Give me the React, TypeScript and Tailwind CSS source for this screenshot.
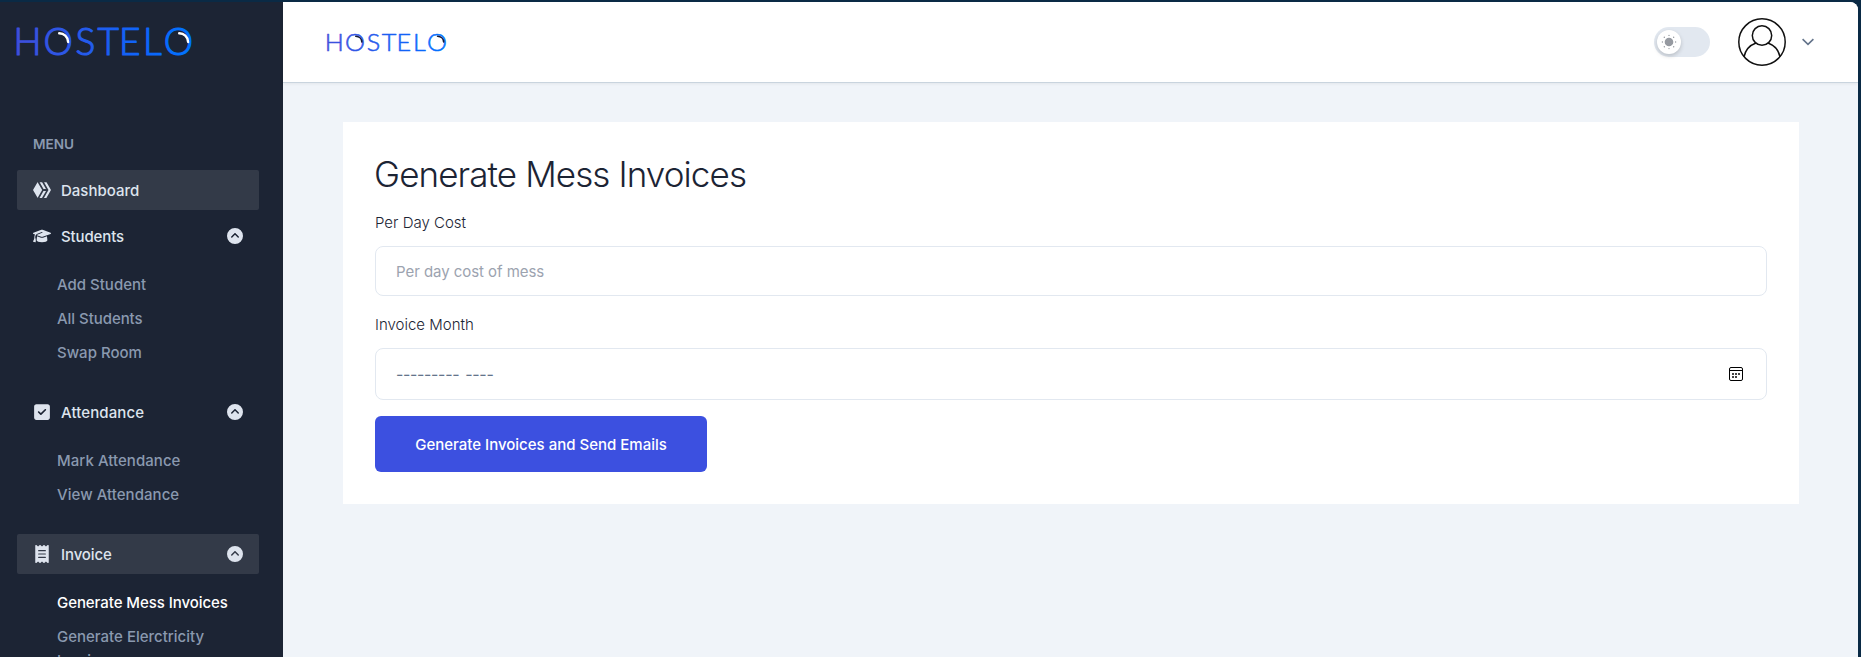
import type { ReactNode } from "react";
import {
  FaCircleChevronUp,
  FaGraduationCap,
  FaHive,
  FaReceipt,
  FaSquareCheck,
} from "react-icons/fa6";

function Logo({ id, shine, className, stroke }: { id: string; shine: string; className: string; stroke: number }) {
  return (
    <svg viewBox="0 0 176 28" className={className} preserveAspectRatio="none" overflow="visible" aria-label="Hostelo">
      <defs>
        <linearGradient id={id} gradientUnits="userSpaceOnUse" x1="0" y1="0" x2="176" y2="0">
          <stop offset="0" stopColor="#3f4fdc" />
          <stop offset="0.75" stopColor="#0b66fb" />
          <stop offset="1" stopColor="#0075ff" />
        </linearGradient>
      </defs>
      <text
        x="-3.4 26.4 58.5 80.5 102 126 146.7"
        y="27.3"
        fontSize="37"
        fill={`url(#${id})`}
        stroke={`url(#${id})`}
        strokeWidth={stroke}
        strokeLinejoin="round"
        className="font-['Lato',sans-serif] font-light"
      >
        HOSTELO
      </text>
      <path d="M42.2 5.2c4.8.2 8.6 3.6 8.9 8.8M162.2 5.2c4.8.2 8.6 3.6 8.9 8.8" stroke={shine} strokeWidth="2.4" fill="none" strokeLinecap="round" />
    </svg>
  );
}

function Item({ icon, label, active, expandable, tracking = "" }: { icon: ReactNode; label: string; active?: boolean; expandable?: boolean; tracking?: string }) {
  return (
    <div className={"flex h-10 items-center rounded-xs pr-4 pl-4 font-medium text-[#dee4ee] " + (active ? "bg-[#333a48]" : "")}>
      <span className="flex w-[18px] justify-center">{icon}</span>
      <span className={"ml-2.5 flex-1 pt-0.5 " + tracking}>{label}</span>
      {expandable && <FaCircleChevronUp className="size-4" />}
    </div>
  );
}

function SubMenu({ children }: { children: ReactNode }) {
  return <ul className="mt-[17px] mb-[27px] flex flex-col gap-2.5 pl-10 font-medium text-[#8a99af]">{children}</ul>;
}

function Field({ label, children, className }: { label: string; children: ReactNode; className: string }) {
  return (
    <div className={className}>
      <label className="block leading-6 font-light text-[#1c2434]">{label}</label>
      {children}
    </div>
  );
}

export default function App() {
  return (
    <div className="h-[657px] w-[1861px] overflow-hidden bg-[#0a2a45] pt-0.5 pr-[3px] font-['Inter',sans-serif] text-[15px] leading-6">
      <div className="flex h-full overflow-hidden rounded-tr-lg bg-[#f0f4f9]">
        <aside className="flex w-[283px] shrink-0 flex-col overflow-hidden bg-[#1c2434] pr-6 pl-[17px]">
          <Logo id="side" shine="#ffffff" stroke={1.1} className="mt-[26px] h-7 w-[176px] shrink-0" />
          <h3 className="mt-[76px] mb-3.5 shrink-0 pl-4 text-[13.6px] leading-6 font-semibold text-[#8a99af]">MENU</h3>
          <nav className="w-[242px] shrink-0">
            <Item icon={<FaHive className="size-[18px]" />} label="Dashboard" active />
            <div className="mt-1.5">
              <Item icon={<FaGraduationCap className="size-[18px]" />} label="Students" expandable tracking="tracking-[-0.12px]" />
            </div>
            <SubMenu>
              <li>Add Student</li>
              <li className="tracking-[-0.05px]">All Students</li>
              <li>Swap Room</li>
            </SubMenu>
            <Item icon={<FaSquareCheck className="size-[18px]" />} label="Attendance" expandable tracking="tracking-[0.1px]" />
            <SubMenu>
              <li className="tracking-[0.05px]">Mark Attendance</li>
              <li className="tracking-[0.05px]">View Attendance</li>
            </SubMenu>
            <Item icon={<FaReceipt className="size-[18px]" />} label="Invoice" active expandable tracking="tracking-[-0.12px]" />
            <SubMenu>
              <li className="tracking-[-0.06px] whitespace-nowrap text-white">Generate Mess Invoices</li>
              <li>Generate Elerctricity Invoices</li>
            </SubMenu>
          </nav>
        </aside>

        <div className="flex min-w-0 flex-1 flex-col">
          <header className="flex h-20 shrink-0 items-center bg-white pr-11 pl-11 shadow-[0_1px_0_#c9d4de,0_2px_3px_rgba(0,0,0,0.06)]">
            <Logo id="top" shine="#111c3a" stroke={0.8} className="h-[18px] w-[120px]" />
            <div className="ml-auto flex h-[30px] w-14 items-center rounded-full bg-[#e2e8f0] pl-[3px]">
              <span className="flex size-6 items-center justify-center rounded-full bg-white shadow-[0_2px_4px_rgba(0,0,0,0.18)]">
                <svg viewBox="0 0 16 16" className="size-4" fill="#969aa1">
                  <circle cx="8" cy="8" r="4.3" />
                  {[0, 45, 90, 135, 180, 225, 270, 315].map((a) => (
                    <circle key={a} cx="8" cy="1.4" r="0.7" transform={`rotate(${a} 8 8)`} />
                  ))}
                </svg>
              </span>
            </div>
            <svg viewBox="0 0 48 48" className="ml-7 size-12" fill="none" stroke="#111111" strokeWidth="1.5">
              <circle cx="24" cy="24" r="23.2" />
              <circle cx="24" cy="17.5" r="9.7" />
              <path d="M6 38.8c1.3-6.4 5.9-11.6 12-13.8M42 38.8c-1.3-6.4-5.9-11.6-12-13.8" />
            </svg>
            <svg viewBox="0 0 12 8" className="ml-4 h-2 w-3" fill="none" stroke="#64748b" strokeWidth="1.6">
              <path d="M.6 1.2L6 6.3l5.4-5.1" />
            </svg>
          </header>

          <main className="px-[60px] pt-10">
            <section className="h-[382px] w-[1456px] bg-white px-8 pt-8">
              <h1 className="-ml-px h-10 text-[35px] leading-10 font-light tracking-[-0.9px] text-[#1c2434]">Generate Mess Invoices</h1>
              <Field label="Per Day Cost" className="mt-[17px]">
                <input
                  type="text"
                  placeholder="Per day cost of mess"
                  className="mt-[11px] block h-[50px] w-full rounded-lg border border-[#e2e8f0] bg-transparent px-5 tracking-[-0.05px] outline-none placeholder:text-[#9ca3af]"
                />
              </Field>
              <Field label="Invoice Month" className="mt-[17px]">
                <div className="mt-[11px] flex h-[52px] items-center justify-between rounded-lg border border-[#e2e8f0] pr-[23px] pl-5 text-[#64748b]">
                  <span className="text-base tracking-[-0.34px] [word-spacing:2px] whitespace-pre">{"--------- ----"}</span>
                  <svg viewBox="0 0 14 14" className="size-3.5">
                    <rect x="0.5" y="0.5" width="13" height="13" rx="1.5" fill="none" stroke="#000000" />
                    <path d="M.5 3.5h13" stroke="#000000" />
                    <path d="M3 6h2v2H3zM6 6h2v2H6zM9 6h2v2H9zM3 9h2v2H3zM6 9h2v2H6z" fill="#444444" />
                  </svg>
                </div>
              </Field>
              <button className="mt-4 flex h-14 w-[332px] items-center justify-center rounded-md bg-[#3c50e0] pt-0.5 font-medium text-white">
                Generate Invoices and Send Emails
              </button>
            </section>
          </main>
        </div>
      </div>
    </div>
  );
}
